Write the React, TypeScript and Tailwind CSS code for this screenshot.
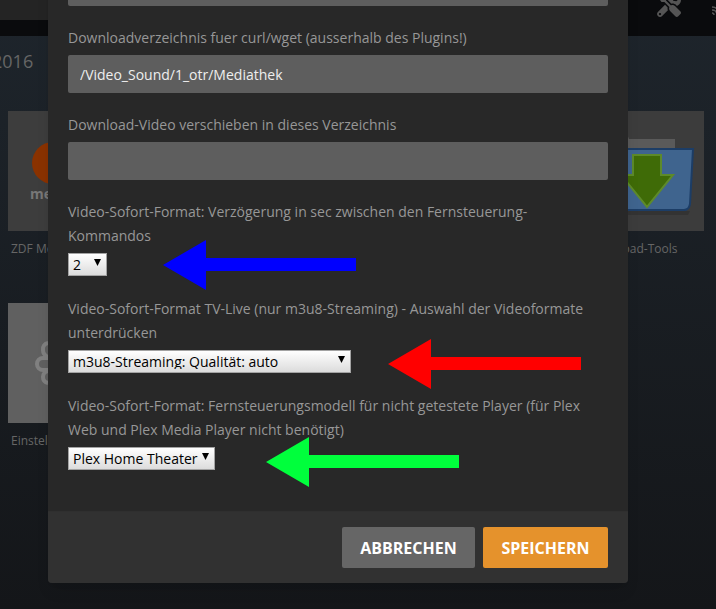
import { FaTools } from 'react-icons/fa';

const fontStack = "font-['Open_Sans',sans-serif]";

const Arrow = ({ color, className }: { color: string; className: string }) => (
  <svg
    className={`absolute ${className}`}
    width="193"
    height="50"
    viewBox="0 0 193 50"
  >
    <polygon
      points="0,25 43,0 43,18 193,18 193,31 43,31 43,50"
      fill={color}
    />
  </svg>
);

const Field = ({ label, value }: { label: string; value?: string }) => (
  <div className="mb-5">
    <label className="mb-[5px] block text-sm leading-6 text-[#979797]">
      {label}
    </label>
    <input
      readOnly
      value={value ?? ''}
      className="block h-[38px] w-full rounded-[2px] bg-[#5e5e5e] px-3 text-sm text-[#eeeeee] outline-none"
    />
  </div>
);

const SelectField = ({
  label,
  value,
  width,
}: {
  label: string;
  value: string;
  width: string;
}) => (
  <div className="mb-[21px]">
    <label className="mb-[5px] block text-sm leading-6 text-[#979797]">
      {label}
    </label>
    <div className={`relative h-[23px] ${width}`}>
      <select
        value={value}
        onChange={() => {}}
        className="block h-full w-full appearance-none rounded-none border border-[#a3a3a3] bg-gradient-to-b from-white to-[#dcdcdc] pl-1 text-sm leading-none text-black outline-none"
      >
        <option>{value}</option>
      </select>
      <svg
        className="pointer-events-none absolute right-[6px] top-[6px]"
        width="7"
        height="7"
        viewBox="0 0 7 7"
      >
        <polygon points="0,0 7,0 3.5,7" fill="#000" />
      </svg>
    </div>
  </div>
);

const Tile = ({
  label,
  bg,
  children,
}: {
  label: string;
  bg: string;
  children?: React.ReactNode;
}) => (
  <div className="w-[120px]">
    <div className={`relative h-[120px] w-[120px] overflow-hidden ${bg}`}>
      {children}
    </div>
    <div className="mt-[9px] whitespace-nowrap pl-[3px] text-xs leading-[18px] text-[#666666]">
      {label}
    </div>
  </div>
);

export default function App() {
  return (
    <div
      className={`relative h-[609px] w-[716px] overflow-hidden bg-gradient-to-b from-[#1e252c] to-[#141619] ${fontStack}`}
    >
      {/* Dimmed page behind the dialog */}
      <div className="flex h-9 items-start justify-end bg-[#0a0b0d]">
        <FaTools className="mt-[-7px] mr-[30px] size-6 text-[#555555]" />
        <svg
          className="-mr-[5px]"
          width="10"
          height="17"
          viewBox="0 0 10 17"
          fill="none"
          stroke="#555555"
          strokeWidth="1.5"
        >
          <path d="M1 7c4 0 7 3 7 8M1 10c3 0 5 2 5 5M1 13c1 0 2 1 2 2" />
          <path d="M7 0v4" />
        </svg>
      </div>
      <div className="absolute left-0 top-0 h-5 w-12 bg-[#242424]" />

      <div className="-ml-2 mt-[12px] text-lg leading-[26px] text-[#666666]">
        2016
      </div>

      <div className="mt-[37px] flex justify-between pl-2 pr-3">
        <Tile label="ZDF Mediathek" bg="bg-[#3d3d3d]">
          <div className="absolute left-6 top-[31px] size-[42px] rounded-full bg-[#8a3200]" />
          <div className="absolute left-[22px] top-[75px] text-sm font-bold leading-4 text-[#777777]">
            mediathek
          </div>
        </Tile>
        <Tile label="Download-Tools" bg="bg-[#3c3c3c]">
          <svg
            className="absolute left-0 top-0"
            width="120"
            height="120"
            viewBox="0 0 120 120"
          >
            <path d="M10 15h30l5 13h46v12h-81z" fill="#5a5a5a" />
            <path d="M8 100h98l-2 4h-94z" fill="#333333" />
            <path
              d="M6 38h103l-3 55q-1 6-6 6h-90q-5 0-5-6z"
              fill="#3f648e"
              stroke="#1c3d66"
              strokeWidth="2"
            />
            <path
              d="M49 44h28v20h12l-26 32-26-32h12z"
              fill="#3f6b07"
              stroke="#5d8a2a"
              strokeWidth="2"
            />
          </svg>
        </Tile>
      </div>

      <div className="mt-[45px] flex px-2">
        <Tile label="Einstellungen" bg="bg-[#606060]">
          <svg
            className="absolute left-0 top-0"
            width="120"
            height="120"
            viewBox="0 0 120 120"
            fill="none"
            stroke="#808080"
            strokeWidth="4"
          >
            <path d="M40 40a6 6 0 0 0-5 7q0 5 5 7" />
            <path d="M40 55h-5a6 6 0 0 0 0 12h5" />
            <path d="M40 68a6 6 0 0 0-5 6q0 5 5 6" />
          </svg>
        </Tile>
      </div>

      {/* Dialog */}
      <div className="absolute left-12 top-[-50px] w-[580px] rounded-b bg-[#282828] shadow-lg">
        <div className="px-5 pt-[18px]">
          <input
            readOnly
            className="mb-5 block h-[38px] w-full rounded-[2px] bg-[#5e5e5e]"
          />
          <Field
            label="Downloadverzeichnis fuer curl/wget (ausserhalb des Plugins!)"
            value="/Video_Sound/1_otr/Mediathek"
          />
          <Field label="Download-Video verschieben in dieses Verzeichnis" />
          <SelectField
            label="Video-Sofort-Format: Verzögerung in sec zwischen den Fernsteuerung-Kommandos"
            value="2"
            width="w-[39px]"
          />
          <SelectField
            label="Video-Sofort-Format TV-Live (nur m3u8-Streaming) - Auswahl der Videoformate unterdrücken"
            value="m3u8-Streaming: Qualität: auto"
            width="w-[283px]"
          />
          <SelectField
            label="Video-Sofort-Format: Fernsteuerungsmodell für nicht getestete Player (für Plex Web und Plex Media Player nicht benötigt)"
            value="Plex Home Theater"
            width="w-[147px]"
          />
        </div>
        <div className="mt-[41px] flex justify-end gap-2 rounded-b border-t border-[#2f2f2f] bg-[#313131] px-5 py-[15px]">
          <button className="h-[41px] w-[133px] rounded-[2px] bg-[#666666] text-base font-bold uppercase text-white">
            Abbrechen
          </button>
          <button className="h-[41px] w-[125px] rounded-[2px] bg-[#e5922c] text-base font-bold uppercase text-white">
            Speichern
          </button>
        </div>
      </div>

      {/* Annotation arrows */}
      <Arrow color="#0000ff" className="left-[163px] top-[240px]" />
      <Arrow color="#ff0000" className="left-[388px] top-[339px]" />
      <Arrow color="#00ff3c" className="left-[266px] top-[437px]" />
    </div>
  );
}
